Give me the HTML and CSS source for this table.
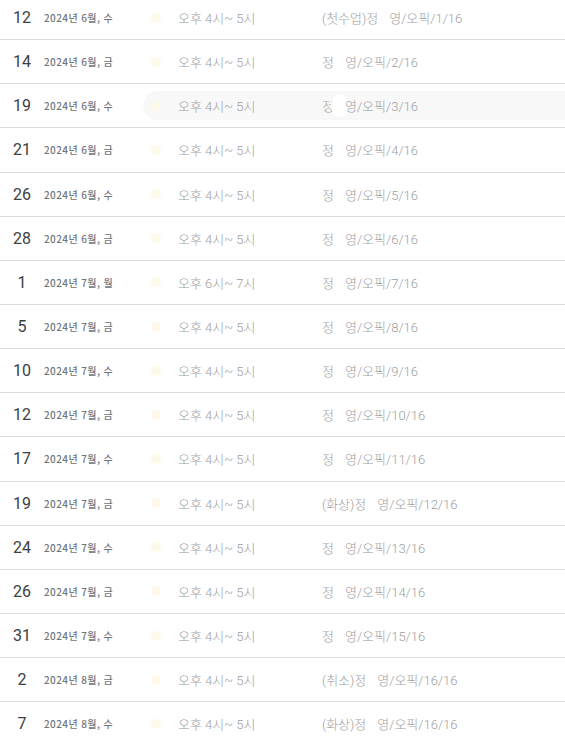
FILE: index.html
```html
<!DOCTYPE html>
<html lang="ko">
<head>
    <meta charset="UTF-8">
    <meta name="viewport" content="width=device-width, initial-scale=1.0">
    <title>일정</title>
    <link rel="stylesheet" href="styles.css">
</head>
<body>
    <div class="agenda">
        <div class="row"><span class="day">12</span><span class="date">2024년 6월, 수</span><div class="event"><span class="dot"></span><span class="time">오후 4시~ 5시</span><span class="title">(첫수업)정<span class="gap"></span>영/오픽/1/16</span></div></div>
        <div class="row"><span class="day">14</span><span class="date">2024년 6월, 금</span><div class="event"><span class="dot"></span><span class="time">오후 4시~ 5시</span><span class="title">정<span class="gap"></span>영/오픽/2/16</span></div></div>
        <div class="row"><span class="day">19</span><span class="date">2024년 6월, 수</span><div class="event hover"><span class="dot"></span><span class="time">오후 4시~ 5시</span><span class="title">정<span class="gap"><span class="blot"></span></span>영/오픽/3/16</span></div></div>
        <div class="row"><span class="day">21</span><span class="date">2024년 6월, 금</span><div class="event"><span class="dot"></span><span class="time">오후 4시~ 5시</span><span class="title">정<span class="gap"></span>영/오픽/4/16</span></div></div>
        <div class="row"><span class="day">26</span><span class="date">2024년 6월, 수</span><div class="event"><span class="dot"></span><span class="time">오후 4시~ 5시</span><span class="title">정<span class="gap"></span>영/오픽/5/16</span></div></div>
        <div class="row"><span class="day">28</span><span class="date">2024년 6월, 금</span><div class="event"><span class="dot"></span><span class="time">오후 4시~ 5시</span><span class="title">정<span class="gap"></span>영/오픽/6/16</span></div></div>
        <div class="row"><span class="day">1</span><span class="date">2024년 7월, 월</span><div class="event"><span class="dot"></span><span class="time">오후 6시~ 7시</span><span class="title">정<span class="gap"></span>영/오픽/7/16</span></div></div>
        <div class="row"><span class="day">5</span><span class="date">2024년 7월, 금</span><div class="event"><span class="dot"></span><span class="time">오후 4시~ 5시</span><span class="title">정<span class="gap"></span>영/오픽/8/16</span></div></div>
        <div class="row"><span class="day">10</span><span class="date">2024년 7월, 수</span><div class="event"><span class="dot"></span><span class="time">오후 4시~ 5시</span><span class="title">정<span class="gap"></span>영/오픽/9/16</span></div></div>
        <div class="row"><span class="day">12</span><span class="date">2024년 7월, 금</span><div class="event"><span class="dot"></span><span class="time">오후 4시~ 5시</span><span class="title">정<span class="gap"></span>영/오픽/10/16</span></div></div>
        <div class="row"><span class="day">17</span><span class="date">2024년 7월, 수</span><div class="event"><span class="dot"></span><span class="time">오후 4시~ 5시</span><span class="title">정<span class="gap"></span>영/오픽/11/16</span></div></div>
        <div class="row"><span class="day">19</span><span class="date">2024년 7월, 금</span><div class="event"><span class="dot"></span><span class="time">오후 4시~ 5시</span><span class="title">(화상)정<span class="gap"></span>영/오픽/12/16</span></div></div>
        <div class="row"><span class="day">24</span><span class="date">2024년 7월, 수</span><div class="event"><span class="dot"></span><span class="time">오후 4시~ 5시</span><span class="title">정<span class="gap"></span>영/오픽/13/16</span></div></div>
        <div class="row"><span class="day">26</span><span class="date">2024년 7월, 금</span><div class="event"><span class="dot"></span><span class="time">오후 4시~ 5시</span><span class="title">정<span class="gap"></span>영/오픽/14/16</span></div></div>
        <div class="row"><span class="day">31</span><span class="date">2024년 7월, 수</span><div class="event"><span class="dot"></span><span class="time">오후 4시~ 5시</span><span class="title">정<span class="gap"></span>영/오픽/15/16</span></div></div>
        <div class="row"><span class="day">2</span><span class="date">2024년 8월, 금</span><div class="event"><span class="dot"></span><span class="time">오후 4시~ 5시</span><span class="title">(취소)정<span class="gap"></span>영/오픽/16/16</span></div></div>
        <div class="row"><span class="day">7</span><span class="date">2024년 8월, 수</span><div class="event"><span class="dot"></span><span class="time">오후 4시~ 5시</span><span class="title">(화상)정<span class="gap"></span>영/오픽/16/16</span></div></div>
    </div>
</body>
</html>
```

FILE: styles.css
```css
body {
    margin: 0;
    background: #fff;
    font-family: Roboto, "Noto Sans CJK KR", sans-serif;
    overflow: hidden;
}
.agenda {
    margin-top: -4px;
}
.row {
    display: flex;
    align-items: center;
    height: 43.15px;
    border-bottom: 1px solid #dadce0;
}
.day {
    width: 44px;
    text-align: center;
    font-size: 16px;
    color: #3c4043;
}
.date {
    width: 99px;
    font-size: 10px;
    font-weight: 500;
    letter-spacing: 0.4px;
    color: #70757a;
    font-family: "Noto Sans CJK KR", sans-serif;
}
.event {
    flex: 1;
    display: flex;
    align-items: center;
    height: 29px;
    padding-left: 8px;
    border-radius: 15px 0 0 15px;
}
.event.hover {
    background: #f8f8f8;
}
.dot {
    width: 10px;
    height: 10px;
    border-radius: 50%;
    background: #fef9e8;
}
.time {
    margin-left: 17px;
    width: 144px;
    font-size: 13px;
    font-weight: 300;
    color: #9e9e9e;
}
.title {
    display: flex;
    align-items: center;
    font-size: 13px;
    font-weight: 300;
    color: #9e9e9e;
}
.gap {
    display: flex;
    justify-content: center;
    width: 11px;
}
.blot {
    flex-shrink: 0;
    width: 17px;
    height: 23px;
    border-radius: 50%;
    background: #fff;
}
```
